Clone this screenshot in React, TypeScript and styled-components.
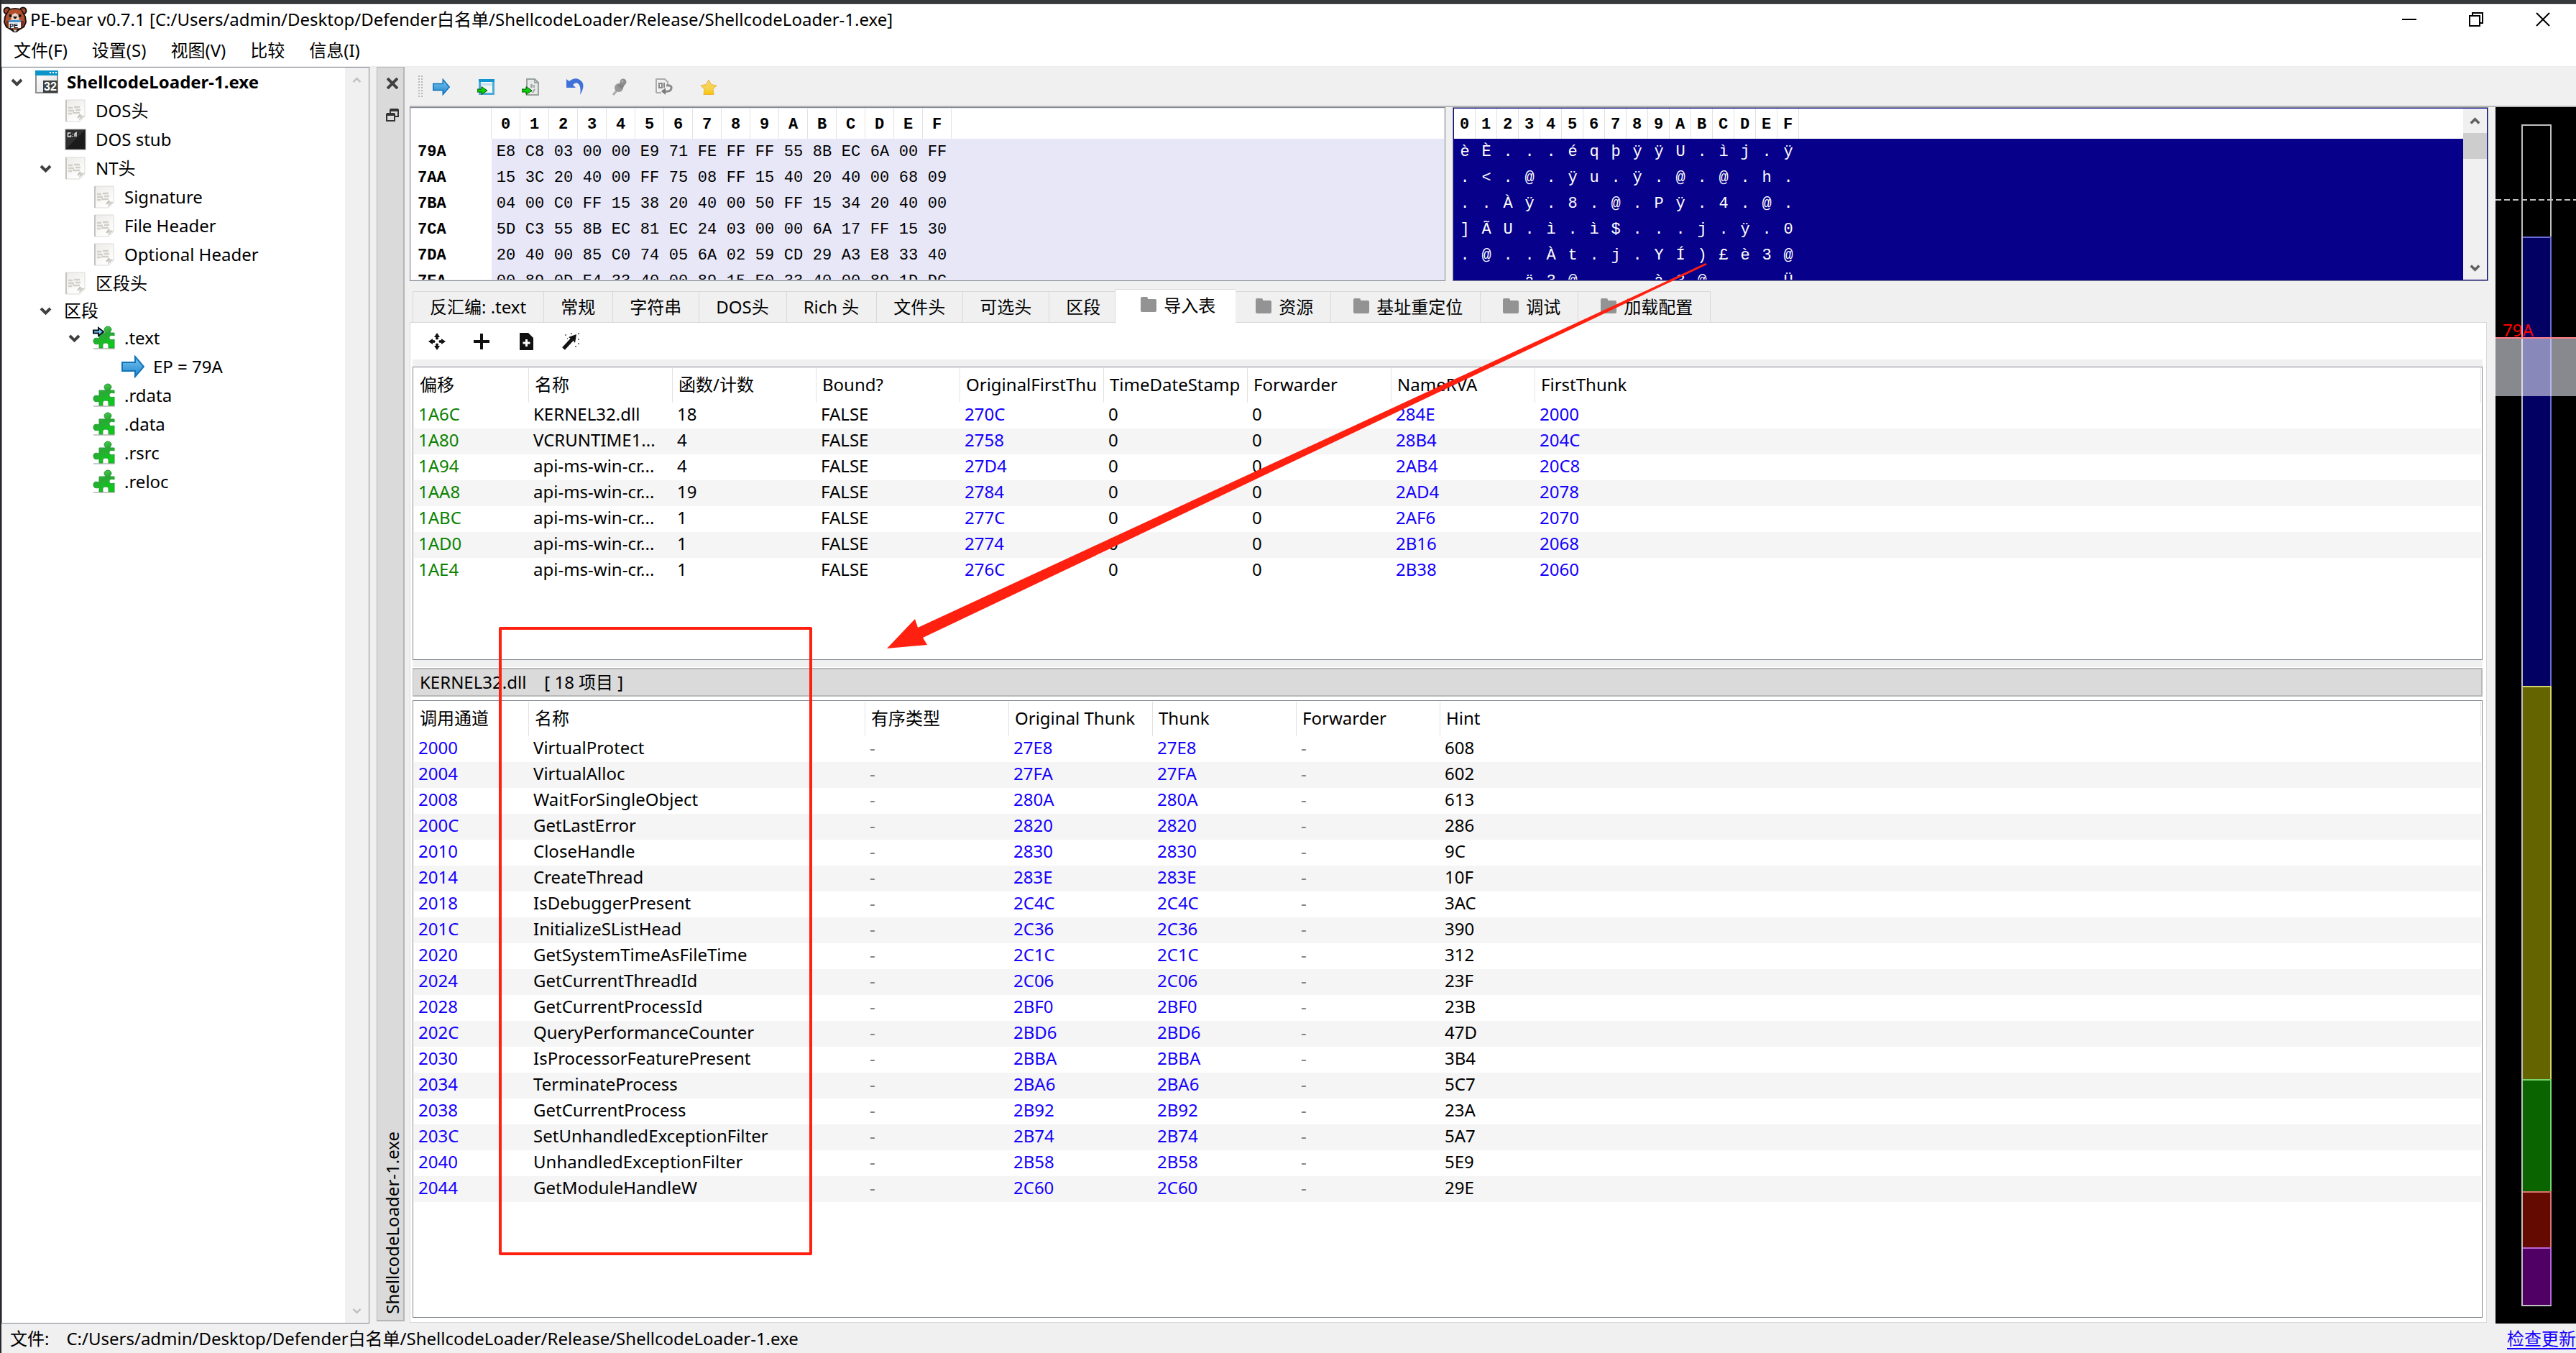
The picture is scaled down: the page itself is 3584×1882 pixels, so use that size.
import React from "react";
import styled, { createGlobalStyle } from "styled-components";

const sans = `"Noto Sans", "Noto Sans CJK SC", sans-serif`;
const mono = `"Liberation Mono", "Noto Sans CJK SC", monospace`;
const blue = "#1400ff";
const green = "#0a8200";
const frame = "#828790";
const panel = "#f0f0f0";
const navy = "#07008b";
const mark = "#ff2010";

const GlobalStyle = createGlobalStyle`
  * { box-sizing: border-box; }
  html, body { margin: 0; height: 100%; }
  body { font-family: ${sans}; font-size: 24px; line-height: 36px; color: #000; background: ${panel}; overflow: hidden; }
  button { font: inherit; color: inherit; background: none; border: 0; padding: 0; margin: 0; }
  table { border-collapse: separate; border-spacing: 0; table-layout: fixed; width: 100%; }
  th, td { padding: 0; text-align: left; white-space: nowrap; overflow: hidden; }
  ul { list-style: none; margin: 0; padding: 0; }
  svg { display: block; flex: none; }
`;

/* ---------- window frame ---------- */

const Window = styled.div`
  position: relative;
  height: 100vh;
  display: flex;
  flex-direction: column;
  background: ${panel};
  border-left: 2px solid #26282b;
`;
const TopEdge = styled.div`
  height: 6px;
  flex: none;
  background: #36383b;
  border-bottom: 1px solid #b8b8b8;
  box-shadow: inset 0 -1px 0 #000;
`;
const TitleBar = styled.header`
  height: 42px;
  flex: none;
  display: flex;
  align-items: center;
  padding-left: 2px;
  background: #fff;
`;
const Title = styled.h1`
  flex: 1;
  margin: 0 0 0 4px;
  font-size: 24px;
  font-weight: 400;
  line-height: 36px;
`;
const WindowButton = styled.button`
  width: 93px;
  height: 36px;
  display: grid;
  place-items: center;
`;
const MenuBar = styled.nav`
  height: 45px;
  flex: none;
  display: flex;
  align-items: center;
  background: #fff;
  border-bottom: 1px solid #ececec;
`;
const MenuItem = styled.button`
  padding: 0 17px;
`;
const Workspace = styled.div`
  flex: 1;
  min-height: 0;
  display: flex;
`;
const StatusBar = styled.footer`
  height: 41px;
  flex: none;
  display: flex;
  align-items: center;
  gap: 24px;
  padding-left: 12px;
`;
const StatusPath = styled.span`
  flex: 1;
`;
const UpdateLink = styled.a`
  color: ${blue};
  text-decoration: underline;
  text-underline-offset: 4px;
`;

/* ---------- tree ---------- */

const TreePanel = styled.aside`
  width: 512px;
  flex: none;
  display: flex;
  background: #fff;
  border: 1px solid ${frame};
`;
const TreeList = styled.ul`
  flex: 1;
`;
const TreeRow = styled.li<{ $depth: number; $bold?: boolean; $short?: boolean }>`
  height: ${(p) => (p.$short ? 36 : 40)}px;
  display: flex;
  align-items: center;
  padding-left: ${(p) => 8 + p.$depth * 40}px;
  font-weight: ${(p) => (p.$bold ? 700 : 400)};
`;
const Twisty = styled.span`
  width: 38px;
  flex: none;
  padding-left: 4px;
`;
const TreeIcon = styled.span`
  width: 44px;
  flex: none;
`;
const ScrollTrack = styled.div<{ $width: number }>`
  width: ${(p) => p.$width}px;
  flex: none;
  display: flex;
  flex-direction: column;
  justify-content: space-between;
  align-items: center;
  background: ${panel};
`;
const ScrollButton = styled.button`
  width: 100%;
  height: 34px;
  display: grid;
  place-items: center;
`;
const ScrollThumb = styled.div`
  width: 100%;
  height: 36px;
  margin-bottom: auto;
  background: #cdcdcd;
`;

/* ---------- dock ---------- */

const DockTitle = styled.div`
  width: 39px;
  flex: none;
  margin: 0 7px 3px 10px;
  padding-left: 5px;
  display: flex;
  flex-direction: column;
  align-items: center;
  background: #dadada;
  border: 1px solid #b5b5b5;
  border-right-width: 2px;
  border-bottom-width: 2px;
`;
const DockButton = styled.button`
  width: 32px;
  height: 44px;
  display: grid;
  place-items: center;
`;
const DockName = styled.span`
  margin-top: auto;
  padding-top: 8px;
  writing-mode: vertical-rl;
  transform: rotate(180deg);
  white-space: nowrap;
`;
const Dock = styled.main`
  flex: 1;
  min-width: 0;
  display: flex;
  flex-direction: column;
`;
const ToolBar = styled.div`
  height: 56px;
  flex: none;
  display: flex;
  align-items: center;
  gap: 22px;
  padding: 2px 0 0 12px;
  border-bottom: 2px solid #b8b8b8;
`;
const Handle = styled.span`
  width: 8px;
  height: 32px;
  margin-right: -18px;
  background: conic-gradient(#b8b8b8 25%, transparent 0) -2px 0 / 4px 4px;
`;
const ToolButton = styled.button`
  width: 40px;
  height: 40px;
  display: grid;
  place-items: center;
`;
const DockBody = styled.div`
  flex: 1;
  min-height: 0;
  display: flex;
`;
const Center = styled.div`
  flex: 1;
  min-width: 0;
  display: flex;
  flex-direction: column;
`;

/* ---------- hex views ---------- */

const HexArea = styled.section`
  height: 242px;
  flex: none;
  display: flex;
  gap: 10px;
  font-family: ${mono};
  font-size: 22px;
`;
const HexPanel = styled.div<{ $fill: string }>`
  flex: 1 1 0;
  min-width: 0;
  display: flex;
  overflow: hidden;
  padding: 1px;
  background: ${(p) => p.$fill};
  border: 1px solid ${frame};
`;
const HexScroll = styled.div`
  flex: 1;
  min-width: 0;
  height: 238px;
  overflow: hidden;
`;
const HexHead = styled.th`
  height: 42px;
  padding-top: 4px;
  background: #fff;
  border-right: 1px solid #e2e2e2;
  text-align: center;
  &:last-child { border-right: 0; }
`;
const AddressCell = styled.th`
  height: 36px;
  padding: 2px 0 0 9px;
  line-height: 32px;
  background: #fff;
`;
const ByteCell = styled.td<{ $light?: boolean }>`
  height: 36px;
  padding-top: 2px;
  line-height: 32px;
  text-align: center;
  color: ${(p) => (p.$light ? "#fff" : "#000")};
`;

/* ---------- tabs ---------- */

const TabBar = styled.div`
  height: 57px;
  flex: none;
  display: flex;
  align-items: flex-end;
  padding-left: 4px;
`;
const Tab = styled.button<{ $active?: boolean }>`
  position: relative;
  z-index: ${(p) => (p.$active ? 1 : 0)};
  height: ${(p) => (p.$active ? 48 : 43)}px;
  margin: ${(p) => (p.$active ? "0 -4px -2px" : "0")};
  padding: ${(p) => (p.$active ? "0 28px 4px 27px" : "0 24px 0 23px")};
  display: flex;
  align-items: center;
  gap: 8px;
  background: ${(p) => (p.$active ? "#fff" : panel)};
  border: solid #d9d9d9;
  border-width: 1px 0 0 1px;
  &:last-child { border-right-width: 1px; }
`;
const Pane = styled.section`
  flex: 1;
  min-height: 0;
  margin: 0 2px 1px 0;
  padding: 0 5px 6px 3px;
  display: flex;
  flex-direction: column;
  background: #fff;
  border: 1px solid #d9d9d9;
`;
const PaneTools = styled.div`
  height: 51px;
  flex: none;
  display: flex;
  align-items: center;
  gap: 22px;
  padding-left: 14px;
`;
const Splitter = styled.div`
  height: 10px;
  flex: none;
  background: ${panel};
`;
const GroupTitle = styled.h2`
  height: 40px;
  flex: none;
  margin: 1px 0 5px;
  padding-left: 9px;
  font-size: 24px;
  font-weight: 400;
  line-height: 36px;
  white-space: pre;
  background: #dadada;
  border: 2px solid #b8b8b8;
  border-left-width: 1px;
`;
const Grid = styled.div<{ $height?: number }>`
  flex: ${(p) => (p.$height ? "none" : 1)};
  height: ${(p) => (p.$height ? `${p.$height}px` : "auto")};
  min-height: 0;
  padding: 1px;
  overflow: hidden;
  border: 1px solid ${frame};
`;
const GridHead = styled.th`
  height: 48px;
  padding: 0 0 2px 8px;
  font-weight: 400;
  border-right: 1px solid #e2e2e2;
`;
const GridRow = styled.tr`
  &:nth-child(even) { background: #f5f5f5; }
`;
const GridCell = styled.td<{ $color?: string }>`
  height: 36px;
  padding: 0 8px 4px 6px;
  line-height: 32px;
  color: ${(p) => p.$color || "#000"};
  text-overflow: ellipsis;
`;

/* ---------- section map ---------- */

const SectionMap = styled.aside`
  position: relative;
  width: 112px;
  flex: none;
  margin-left: 10px;
  padding: 24px 0 24px 36px;
  display: flex;
  background: #000;
`;
const MapFrame = styled.div`
  width: 42px;
  display: flex;
  flex-direction: column;
  border: 2px solid #c0c0c0;
  border-right-width: 0;
`;
const MapBlock = styled.div<{ $size: number; $fill: string; $line: string }>`
  flex: ${(p) => p.$size} 1 0;
  background: ${(p) => p.$fill};
  box-shadow: inset -2px ${(p) => (p.$fill === "transparent" ? 0 : 2)}px 0 ${(p) => p.$line};
`;
const MapDash = styled.div`
  position: absolute;
  left: 0;
  right: 0;
  top: 128px;
  height: 2px;
  background: repeating-linear-gradient(90deg, #c0c0c0 0 8px, transparent 8px 12px);
`;
const MapView = styled.div`
  position: absolute;
  left: 0;
  right: 0;
  top: 320px;
  height: 82px;
  background: rgba(243, 243, 255, 0.56);
  border-top: 2px solid #ff7f8c;
`;
const MapLabel = styled.span`
  position: absolute;
  left: 10px;
  top: 292px;
  color: #f00;
`;

/* ---------- annotations over the window ---------- */

const MarkBox = styled.div`
  position: absolute;
  left: 692px;
  top: 872px;
  width: 436px;
  height: 874px;
  border: 4px solid ${mark};
  border-radius: 2px;
`;
const MarkArrow = styled.svg`
  position: absolute;
  left: 1230px;
  top: 360px;
`;

/* ---------- icons ---------- */

const Chevron = ({ up, size = 17, color = "#404040", weight = 4 }: { up?: boolean; size?: number; color?: string; weight?: number }) => (
  <svg width={size} height={size} viewBox="0 0 17 17" fill="none" stroke={color} strokeWidth={weight}>
    <path d={up ? "M2 12 8.500 5.500 15 12" : "M2 5 8.500 11.500 15 5"} />
  </svg>
);

const BearIcon = () => (
  <svg width="34" height="36" viewBox="0 0 34 36">
    <circle cx="6" cy="6" r="5.500" fill="#1a0f0c" />
    <circle cx="28" cy="6" r="5.500" fill="#1a0f0c" />
    <circle cx="6" cy="6" r="3.500" fill="#a5482c" />
    <circle cx="28" cy="6" r="3.500" fill="#a5482c" />
    <path d="M8 4Q17 0 26 4L32 14 33 22 30 29 23 33 19 36H15L11 33 4 29 1 22 2 14Z" fill="#1a0f0c" />
    <path d="M9 5Q17 2 25 5L30 14 31 22 28 28 22 31H12L6 28 3 22 4 14Z" fill="#b24f2d" />
    <path d="M4 20 6 28 10 30V20ZM30 20 28 28 24 30V20Z" fill="#7d2f20" />
    <path d="M12 12 17 9 22 12 23 20H11Z" fill="#e9d3c3" />
    <path d="M14 14H20L18 17H16Z" fill="#111" />
    <circle cx="10.500" cy="13" r="2" fill="#111" />
    <circle cx="23.500" cy="13" r="2" fill="#111" />
    <rect x="8" y="19" width="17" height="11" fill="#f3f6f8" />
    <rect x="8" y="19" width="17" height="3" fill="#4a93c8" />
    <text x="9" y="30" fontSize="9" fontWeight="700" fontFamily="Liberation Sans, sans-serif" fill="#111">PE</text>
    <path d="M14 32H20L18 35H16Z" fill="#d9c7bd" />
  </svg>
);

const ExeIcon = () => (
  <svg width="32" height="32" viewBox="0 0 32 32">
    <defs>
      <linearGradient id="exe" x2="1" y2="1"><stop stopColor="#fff" /><stop offset="1" stopColor="#dcdcdc" /></linearGradient>
    </defs>
    <rect x="1" y="1" width="30" height="30" fill="url(#exe)" stroke="#8b8f90" strokeWidth="2" />
    <rect width="32" height="7" fill="#0c94c9" />
    <path d="M20 3h2M24 3h2M28 3h2" stroke="#fff" strokeWidth="2" />
    <rect x="11" y="14" width="20" height="17" fill="#3b3f40" />
    <text x="12" y="28" fontSize="16" fontWeight="700" fontFamily="Liberation Sans, sans-serif" fill="#fff">32</text>
  </svg>
);

const DocIcon = () => (
  <svg width="32" height="32" viewBox="0 0 32 32">
    <defs>
      <linearGradient id="doc" x2="0.600" y2="1"><stop stopColor="#ecebe8" /><stop offset="1" stopColor="#fff" /></linearGradient>
    </defs>
    <path d="M2.500 1H29V24L22 31H2.500Z" fill="url(#doc)" stroke="#dad9d6" />
    <path d="M3 1V31" stroke="#c4c3c0" strokeWidth="2" />
    <path d="M6 12h6M14 11h8M6 16h8M16 15h7M6 20h5M12 19h10" stroke="#d2cfc7" strokeWidth="2.500" />
    <path d="M21 30 22 22 29 23Z" fill="#d3d0c9" />
    <path d="M19 26 23 21" stroke="#bdbab2" strokeWidth="2" />
  </svg>
);

const StubIcon = () => (
  <svg width="32" height="32" viewBox="0 0 32 32">
    <rect x="2" y="2" width="28" height="28" fill="#1b1b1b" stroke="#8a8a8a" />
    <path d="M3 29V3H29L10 22Z" fill="#2f2f2f" />
    <path d="M9.500 7H5.500V12H9.500V10M12 8v1M12 11v1M15 12V8l2-1.500V12" stroke="#e6e6e6" strokeWidth="1.500" fill="none" />
  </svg>
);

const PuzzleIcon = ({ entry }: { entry?: boolean }) => (
  <svg width="32" height="34" viewBox="0 0 32 34">
    <defs>
      <linearGradient id="puzzle" x2="0.400" y2="1">
        <stop stopColor="#5fdc62" /><stop offset="0.500" stopColor="#2aa836" /><stop offset="1" stopColor="#0fc81c" />
      </linearGradient>
    </defs>
    <path d="M1 32H31" stroke="#c8c8c8" strokeWidth="2" />
    <path
      d="M9 10H18C17 8 16 7 16 5.500a5 4.500 0 0 1 10 0C26 7 24 8 24 10H30V14C27 13 23 13 23 16.500C23 20 27 20 30 19V31H22C22 28 23 24 18 24C13 24 14 28 14 31H9V25C7 26 1 27 1 21.500C1 16 6 17 9 18Z"
      fill="url(#puzzle)" stroke="#249a35"
    />
    {entry && <path d="M1 6.500H8V3L15 8.500 8 14V10.500H1Z" fill="#7ec6f5" stroke="#05121c" strokeWidth="2" />}
  </svg>
);

const ArrowIcon = ({ size }: { size: number }) => (
  <svg width={size} height={size} viewBox="0 0 32 32">
    <defs>
      <linearGradient id="arrow" x2="0" y2="1"><stop stopColor="#7cc4f2" /><stop offset="1" stopColor="#1f86cc" /></linearGradient>
    </defs>
    <path d="M1 10H19V2L31 16 19 30V22H1Z" fill="url(#arrow)" stroke="#0f74bb" strokeWidth="2" />
  </svg>
);

const GreenArrow = () => <path d="M0 15H6V11.500L14 17 6 22.500V19H0Z" fill="#0ad00a" stroke="#075007" />;

const LoadExeIcon = () => (
  <svg width="24" height="24" viewBox="0 0 24 24">
    <rect x="3.500" y="2.500" width="19" height="19" fill="#eef6fa" stroke="#4cabd3" strokeWidth="3" />
    <rect x="2" y="1" width="22" height="4" fill="#1396cf" />
    <rect x="5" y="7" width="16" height="3" fill="#c6dfeb" />
    <GreenArrow />
  </svg>
);

const LoadDocIcon = () => (
  <svg width="24" height="24" viewBox="0 0 24 24">
    <path d="M7 1H18L23 6V23H7Z" fill="#e6e9e7" stroke="#9aa29e" strokeWidth="2" />
    <path d="M18 1V6H23M12 9h2v3h-2M17 9v4M18 15l-3 5M13 16v3" fill="none" stroke="#8f9793" strokeWidth="1.500" />
    <GreenArrow />
  </svg>
);

const UndoIcon = () => (
  <svg width="24" height="24" viewBox="0 0 24 24">
    <path d="M0 1V13H13L9 9Q13 5 16 7Q21 10 19 23Q26 12 22 5Q14 -4 4 4Z" fill="#3f71d8" />
  </svg>
);

const PinIcon = () => (
  <svg width="24" height="24" viewBox="0 0 24 24">
    <path d="M3 23 10 15" stroke="#ababab" strokeWidth="3" />
    <circle cx="11" cy="13" r="6" fill="#989898" />
    <path d="M9 11 14 5 19 9 16 15Z" fill="#858585" />
    <circle cx="17" cy="5" r="4.500" fill="#8e8e8e" />
    <circle cx="16" cy="4" r="1.500" fill="#b5b5b5" />
  </svg>
);

const ReloadIcon = () => (
  <svg width="24" height="24" viewBox="0 0 24 24" fill="none">
    <path d="M1 20V1H13L17 5V9" stroke="#acacac" strokeWidth="2" />
    <path d="M1 20H8" stroke="#acacac" strokeWidth="2" />
    <path d="M5 7H9V13H5ZM12 6V13" stroke="#888" strokeWidth="2" />
    <path d="M15 10Q23 9 22 14T13 18" stroke="#8a8a8a" strokeWidth="3" />
    <path d="M14 13V23L8 18Z" fill="#7a7a7a" />
  </svg>
);

const StarIcon = () => (
  <svg width="24" height="24" viewBox="0 0 24 24">
    <defs>
      <linearGradient id="star" x2="0" y2="1"><stop stopColor="#f5d46e" /><stop offset="0.600" stopColor="#f6d24c" /><stop offset="1" stopColor="#fbc400" /></linearGradient>
    </defs>
    <path d="M12 2 15.500 8.500 23 10 18 15 19 22.500H5L6 15 1 10 8.500 8.500Z" fill="url(#star)" stroke="#ecb23c" />
  </svg>
);

const FolderIcon = () => (
  <svg width="32" height="28" viewBox="0 0 32 28">
    <path d="M8 4Q8 2 10 2H16Q18 2 18 4V5H28Q30 5 30 7V21Q30 23 28 23H10Q8 23 8 21Z" fill="#939393" />
  </svg>
);

const MoveIcon = () => (
  <svg width="24" height="24" viewBox="0 0 24 24" fill="#111">
    <path d="M12 0 16 6H8ZM12 24 8 18H16ZM0 12 6 8V16ZM24 12 18 16V8Z" />
    <circle cx="12" cy="7.500" r="2" /><circle cx="12" cy="16.500" r="2" />
    <circle cx="7.500" cy="12" r="2" /><circle cx="16.500" cy="12" r="2" />
  </svg>
);

const PlusIcon = () => (
  <svg width="24" height="24" viewBox="0 0 24 24">
    <path d="M12 1V23M1 12H23" stroke="#111" strokeWidth="4" />
  </svg>
);

const AddFileIcon = () => (
  <svg width="24" height="24" viewBox="0 0 24 24">
    <path d="M3 0H15L22 7V24H3Z" fill="#111" />
    <path d="M12.500 9V19M7.500 14H17.500" stroke="#fff" strokeWidth="3" />
  </svg>
);

const WandIcon = () => (
  <svg width="24" height="24" viewBox="0 0 24 24">
    <path d="M2 22 14 9" stroke="#111" strokeWidth="5" />
    <path d="M9 6 20 2 18 14 15 10Z" fill="#111" />
    <path d="M4 3h2M12 1h2M22 1h2M22 9h2M22 15h2M18 19h2M7 8h1" stroke="#777" strokeWidth="2" />
  </svg>
);

/* ---------- data ---------- */

const menus = ["文件(F)", "设置(S)", "视图(V)", "比较", "信息(I)"];

type Node = { label: string; depth: number; icon?: React.ReactNode; open?: boolean; bold?: boolean };
const tree: Node[] = [
  { label: "ShellcodeLoader-1.exe", depth: 0, icon: <ExeIcon />, open: true, bold: true },
  { label: "DOS头", depth: 1, icon: <DocIcon /> },
  { label: "DOS stub", depth: 1, icon: <StubIcon /> },
  { label: "NT头", depth: 1, icon: <DocIcon />, open: true },
  { label: "Signature", depth: 2, icon: <DocIcon /> },
  { label: "File Header", depth: 2, icon: <DocIcon /> },
  { label: "Optional Header", depth: 2, icon: <DocIcon /> },
  { label: "区段头", depth: 1, icon: <DocIcon /> },
  { label: "区段", depth: 1, open: true },
  { label: ".text", depth: 2, icon: <PuzzleIcon entry />, open: true },
  { label: "EP = 79A", depth: 3, icon: <ArrowIcon size={32} /> },
  { label: ".rdata", depth: 2, icon: <PuzzleIcon /> },
  { label: ".data", depth: 2, icon: <PuzzleIcon /> },
  { label: ".rsrc", depth: 2, icon: <PuzzleIcon /> },
  { label: ".reloc", depth: 2, icon: <PuzzleIcon /> },
];

const digits = "0123456789ABCDEF".split("");
const hexRows: [string, string][] = [
  ["79A", "E8 C8 03 00 00 E9 71 FE FF FF 55 8B EC 6A 00 FF"],
  ["7AA", "15 3C 20 40 00 FF 75 08 FF 15 40 20 40 00 68 09"],
  ["7BA", "04 00 C0 FF 15 38 20 40 00 50 FF 15 34 20 40 00"],
  ["7CA", "5D C3 55 8B EC 81 EC 24 03 00 00 6A 17 FF 15 30"],
  ["7DA", "20 40 00 85 C0 74 05 6A 02 59 CD 29 A3 E8 33 40"],
  ["7EA", "00 89 0D E4 33 40 00 89 15 E0 33 40 00 89 1D DC"],
];
const asciiRows = [
  "èÈ...éqþÿÿU.ìj.ÿ",
  ".<.@.ÿu.ÿ.@.@.h.",
  "..Àÿ.8.@.Pÿ.4.@.",
  "]ÃU.ì.ì$...j.ÿ.0",
  ".@..Àt.j.YÍ)£è3@",
  "...ä3@...à3@...Ü",
];

const tabs: { label: string; folder?: boolean; active?: boolean }[] = [
  { label: "反汇编: .text" },
  { label: "常规" },
  { label: "字符串" },
  { label: "DOS头" },
  { label: "Rich 头" },
  { label: "文件头" },
  { label: "可选头" },
  { label: "区段" },
  { label: "导入表", folder: true, active: true },
  { label: "资源", folder: true },
  { label: "基址重定位", folder: true },
  { label: "调试", folder: true },
  { label: "加载配置", folder: true },
];

const libHead = ["偏移", "名称", "函数/计数", "Bound?", "OriginalFirstThu", "TimeDateStamp", "Forwarder", "NameRVA", "FirstThunk"];
const libWidths = [160, 200, 200, 200, 200, 200, 200, 200];
const libColors = [green, "", "", "", blue, "", "", blue, blue];
const libs = [
  ["1A6C", "KERNEL32.dll", "18", "FALSE", "270C", "0", "0", "284E", "2000"],
  ["1A80", "VCRUNTIME1...", "4", "FALSE", "2758", "0", "0", "28B4", "204C"],
  ["1A94", "api-ms-win-cr...", "4", "FALSE", "27D4", "0", "0", "2AB4", "20C8"],
  ["1AA8", "api-ms-win-cr...", "19", "FALSE", "2784", "0", "0", "2AD4", "2078"],
  ["1ABC", "api-ms-win-cr...", "1", "FALSE", "277C", "0", "0", "2AF6", "2070"],
  ["1AD0", "api-ms-win-cr...", "1", "FALSE", "2774", "0", "0", "2B16", "2068"],
  ["1AE4", "api-ms-win-cr...", "1", "FALSE", "276C", "0", "0", "2B38", "2060"],
];

const fnHead = ["调用通道", "名称", "有序类型", "Original Thunk", "Thunk", "Forwarder", "Hint"];
const fnWidths = [160, 468, 200, 200, 200, 200];
const fnColors = [blue, "", "#808080", blue, blue, "#808080", ""];
const fns = (
  [
    ["2000", "VirtualProtect", "27E8", "608"],
    ["2004", "VirtualAlloc", "27FA", "602"],
    ["2008", "WaitForSingleObject", "280A", "613"],
    ["200C", "GetLastError", "2820", "286"],
    ["2010", "CloseHandle", "2830", "9C"],
    ["2014", "CreateThread", "283E", "10F"],
    ["2018", "IsDebuggerPresent", "2C4C", "3AC"],
    ["201C", "InitializeSListHead", "2C36", "390"],
    ["2020", "GetSystemTimeAsFileTime", "2C1C", "312"],
    ["2024", "GetCurrentThreadId", "2C06", "23F"],
    ["2028", "GetCurrentProcessId", "2BF0", "23B"],
    ["202C", "QueryPerformanceCounter", "2BD6", "47D"],
    ["2030", "IsProcessorFeaturePresent", "2BBA", "3B4"],
    ["2034", "TerminateProcess", "2BA6", "5C7"],
    ["2038", "GetCurrentProcess", "2B92", "23A"],
    ["203C", "SetUnhandledExceptionFilter", "2B74", "5A7"],
    ["2040", "UnhandledExceptionFilter", "2B58", "5E9"],
    ["2044", "GetModuleHandleW", "2C60", "29E"],
  ] as const
).map(([at, name, thunk, hint]) => [at, name, "-", thunk, thunk, "-", hint]);

const blocks = [
  { size: 154, fill: "transparent", line: "#c0c0c0" },
  { size: 625, fill: "#030063", line: "#6c6cd8" },
  { size: 547, fill: "#646400", line: "#d4d46c" },
  { size: 156, fill: "#0a6400", line: "#74d86c" },
  { size: 78, fill: "#640a00", line: "#d8746c" },
  { size: 80, fill: "#500064", line: "#b864d8" },
];

const Cols = ({ widths }: { widths: number[] }) => (
  <colgroup>
    {widths.map((w, i) => <col key={i} width={w} />)}
    <col />
  </colgroup>
);

const DataGrid = ({ head, rows, widths, colors, height }: {
  head: string[]; rows: string[][]; widths: number[]; colors: string[]; height?: number;
}) => (
  <Grid $height={height}>
    <table>
      <Cols widths={widths} />
      <thead>
        <tr>{head.map((h) => <GridHead key={h} scope="col">{h}</GridHead>)}</tr>
      </thead>
      <tbody>
        {rows.map((r) => (
          <GridRow key={r[0]}>
            {r.map((c, i) => <GridCell key={i} $color={colors[i]}>{c}</GridCell>)}
          </GridRow>
        ))}
      </tbody>
    </table>
  </Grid>
);

const toolIcons: [string, React.ReactNode][] = [
  ["Go to entry point", <ArrowIcon size={24} />],
  ["Load executable", <LoadExeIcon />],
  ["Load file", <LoadDocIcon />],
  ["Undo", <UndoIcon />],
  ["Pin", <PinIcon />],
  ["Reload", <ReloadIcon />],
  ["Favourite", <StarIcon />],
];
const paneIcons: [string, React.ReactNode][] = [
  ["Move", <MoveIcon />],
  ["Add", <PlusIcon />],
  ["Add file", <AddFileIcon />],
  ["Auto add", <WandIcon />],
];

export default function App() {
  return (
    <Window>
      <GlobalStyle />
      <TopEdge />
      <TitleBar>
        <BearIcon />
        <Title>PE-bear v0.7.1 [C:/Users/admin/Desktop/Defender白名单/ShellcodeLoader/Release/ShellcodeLoader-1.exe]</Title>
        <WindowButton aria-label="Minimize">
          <svg width="20" height="20"><path d="M0 10H20" stroke="#000" strokeWidth="2" /></svg>
        </WindowButton>
        <WindowButton aria-label="Restore">
          <svg width="20" height="20" fill="none" stroke="#000" strokeWidth="2">
            <path d="M1 5H15V19H1ZM5 5V1H19V15H15" />
          </svg>
        </WindowButton>
        <WindowButton aria-label="Close">
          <svg width="20" height="20"><path d="M1 1 19 19M19 1 1 19" stroke="#000" strokeWidth="2" /></svg>
        </WindowButton>
      </TitleBar>
      <MenuBar>
        {menus.map((m) => <MenuItem key={m}>{m}</MenuItem>)}
      </MenuBar>

      <Workspace>
        <TreePanel>
          <TreeList>
            {tree.map((n) => (
              <TreeRow key={n.label} $depth={n.depth} $bold={n.bold} $short={!n.icon}>
                <Twisty>{n.open && <Chevron />}</Twisty>
                {n.icon && <TreeIcon>{n.icon}</TreeIcon>}
                {n.label}
              </TreeRow>
            ))}
          </TreeList>
          <ScrollTrack $width={33}>
            <ScrollButton aria-label="Scroll up"><Chevron up size={13} color="#bfbfbf" weight={3} /></ScrollButton>
            <ScrollButton aria-label="Scroll down"><Chevron size={13} color="#bfbfbf" weight={3} /></ScrollButton>
          </ScrollTrack>
        </TreePanel>

        <DockTitle>
          <DockButton aria-label="Close panel">
            <svg width="16" height="16"><path d="M1 1 15 15M15 1 1 15" stroke="#404040" strokeWidth="4" /></svg>
          </DockButton>
          <DockButton aria-label="Float panel">
            <svg width="18" height="18" fill="none" stroke="#333" strokeWidth="2">
              <path d="M1 8H12V17H1ZM6 8V2H17V11H12" /><path d="M1 8H12M6 2H17" strokeWidth="4" />
            </svg>
          </DockButton>
          <DockName>ShellcodeLoader-1.exe</DockName>
        </DockTitle>

        <Dock>
          <ToolBar>
            <Handle />
            {toolIcons.map(([name, icon]) => <ToolButton key={name} aria-label={name}>{icon}</ToolButton>)}
          </ToolBar>
          <DockBody>
            <Center>
              <HexArea>
                <HexPanel $fill="#e7e7f7">
                  <HexScroll>
                    <table>
                      <Cols widths={[112, ...digits.map(() => 40)]} />
                      <thead>
                        <tr>
                          <HexHead />
                          {digits.map((d) => <HexHead key={d} scope="col">{d}</HexHead>)}
                          <HexHead />
                        </tr>
                      </thead>
                      <tbody>
                        {hexRows.map(([addr, bytes]) => (
                          <tr key={addr}>
                            <AddressCell scope="row">{addr}</AddressCell>
                            {bytes.split(" ").map((b, i) => <ByteCell key={i}>{b}</ByteCell>)}
                            <td />
                          </tr>
                        ))}
                      </tbody>
                    </table>
                  </HexScroll>
                </HexPanel>
                <HexPanel $fill={navy}>
                  <HexScroll>
                    <table>
                      <Cols widths={digits.map(() => 30)} />
                      <thead>
                        <tr>
                          {digits.map((d) => <HexHead key={d} scope="col">{d}</HexHead>)}
                          <HexHead />
                        </tr>
                      </thead>
                      <tbody>
                        {asciiRows.map((row) => (
                          <tr key={row}>
                            {Array.from(row).map((c, i) => <ByteCell key={i} $light>{c}</ByteCell>)}
                            <td />
                          </tr>
                        ))}
                      </tbody>
                    </table>
                  </HexScroll>
                  <ScrollTrack $width={33}>
                    <ScrollButton aria-label="Scroll up"><Chevron up size={15} color="#606060" /></ScrollButton>
                    <ScrollThumb />
                    <ScrollButton aria-label="Scroll down"><Chevron size={15} color="#606060" /></ScrollButton>
                  </ScrollTrack>
                </HexPanel>
              </HexArea>

              <TabBar role="tablist">
                {tabs.map((t) => (
                  <Tab key={t.label} role="tab" aria-selected={!!t.active} $active={t.active}>
                    {t.folder && <FolderIcon />}
                    {t.label}
                  </Tab>
                ))}
              </TabBar>
              <Pane>
                <PaneTools>
                  {paneIcons.map(([name, icon]) => <ToolButton key={name} aria-label={name}>{icon}</ToolButton>)}
                </PaneTools>
                <Splitter />
                <DataGrid head={libHead} rows={libs} widths={libWidths} colors={libColors} height={408} />
                <Splitter />
                <GroupTitle>{"KERNEL32.dll    [ 18 项目 ]"}</GroupTitle>
                <DataGrid head={fnHead} rows={fns} widths={fnWidths} colors={fnColors} />
              </Pane>
            </Center>

            <SectionMap>
              <MapFrame>
                {blocks.map((b) => <MapBlock key={b.fill} $size={b.size} $fill={b.fill} $line={b.line} />)}
              </MapFrame>
              <MapDash />
              <MapView />
              <MapLabel>79A</MapLabel>
            </SectionMap>
          </DockBody>
        </Dock>
      </Workspace>

      <StatusBar>
        <span>文件:</span>
        <StatusPath>C:/Users/admin/Desktop/Defender白名单/ShellcodeLoader/Release/ShellcodeLoader-1.exe</StatusPath>
        <UpdateLink href="#update">检查更新</UpdateLink>
      </StatusBar>

      <MarkBox />
      <MarkArrow width="1150" height="550" viewBox="1232 360 1150 550" fill={mark}>
        <path d="M1234 902 1273 861 1277 873 2373 366 2375 368 1284 887 1290 897Z" />
      </MarkArrow>
    </Window>
  );
}
